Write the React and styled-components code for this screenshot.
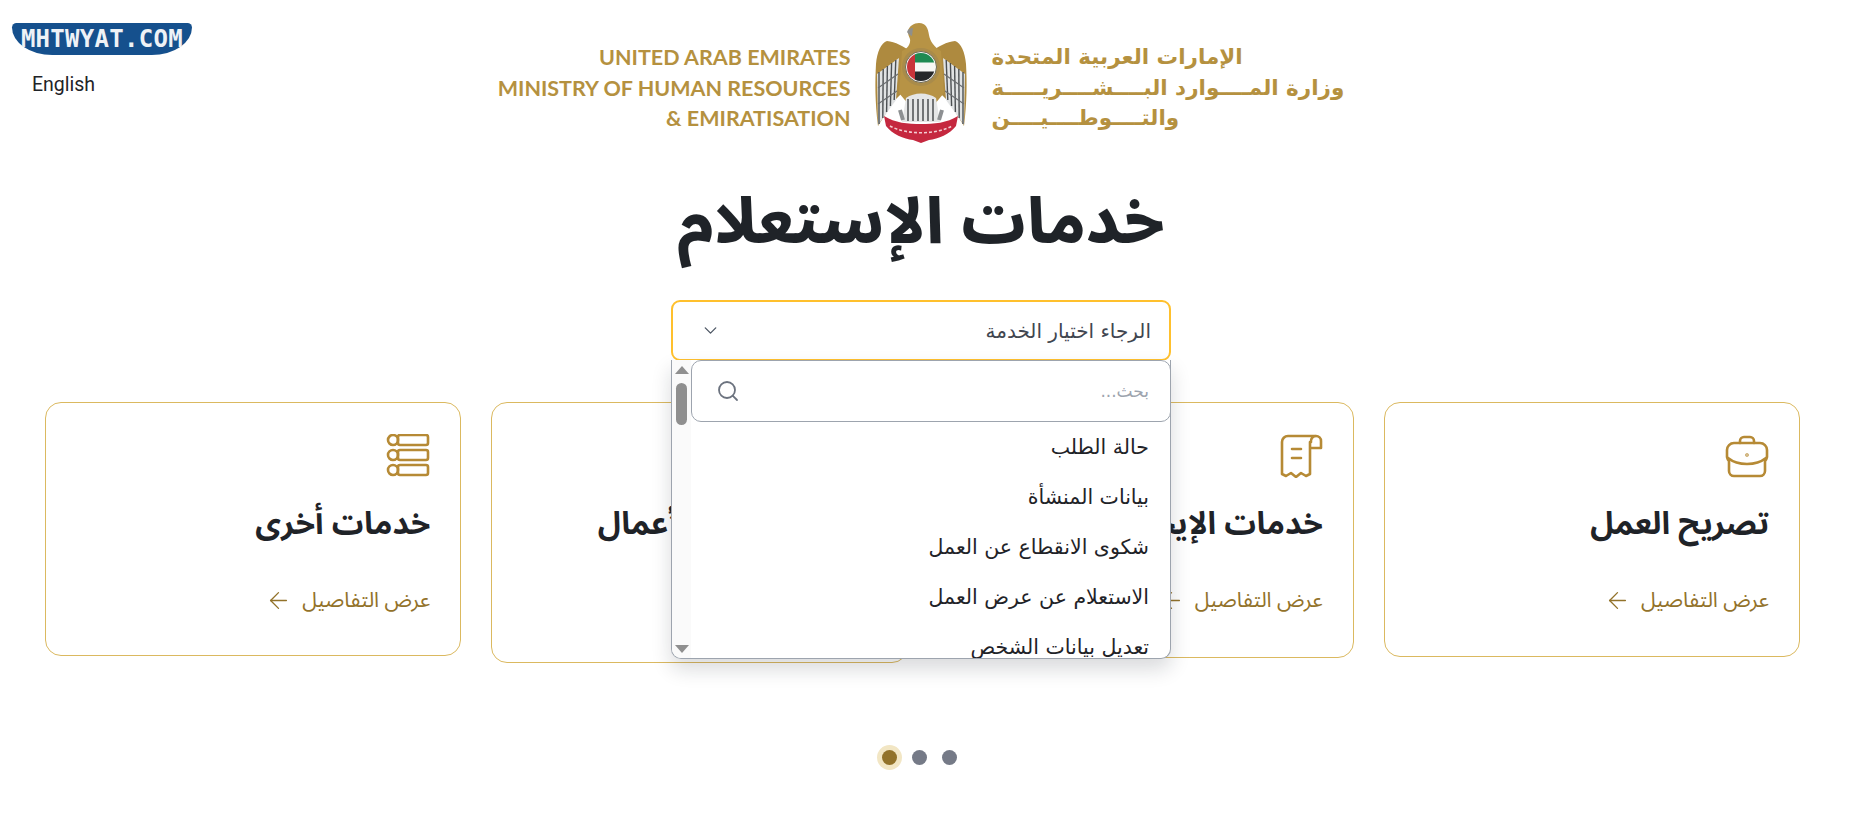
import React from 'react';
import styled, { createGlobalStyle } from 'styled-components';
import { ChevronDown, Search, ArrowLeft } from 'lucide-react';

const ARABIC = `'Noto Sans Arabic', 'DejaVu Sans', sans-serif`;
const ARABIC_UI = `'DejaVu Sans', sans-serif`;

const GlobalStyle = createGlobalStyle`
  html, body { margin: 0; padding: 0; background: #fff; overflow-x: hidden; }
  * { box-sizing: border-box; }
`;

const Page = styled.div`
  min-height: 831px;
  padding-right: 23px;
  font-family: ${ARABIC};
  color: #1f2328;
`;

const TopBar = styled.header`
  display: grid;
  grid-template-columns: 204px 1fr 204px;
  height: 150px;
`;

const Brand = styled.div`
  padding: 23px 0 0 12px;
  direction: ltr;
`;

const BrandPill = styled.div`
  width: 180px;
  height: 32px;
  background: #15508d;
  border-radius: 5px 5px 44px 44px / 5px 5px 30px 30px;
  color: #eef2f6;
  font: 700 24px 'DejaVu Sans Mono', monospace;
  line-height: 32px;
  text-align: center;
  letter-spacing: 0.3px;
`;

const LangLink = styled.a`
  display: block;
  margin: 18px 0 0 20px;
  font: 400 19.5px Roboto, sans-serif;
  color: #1f2328;
`;

const GovLogo = styled.div`
  display: flex;
  justify-content: center;
  align-items: flex-start;
  padding-top: 22px;
  color: #b5913f;
`;

const LogoEnglish = styled.div`
  display: flex;
  flex-direction: column;
  align-items: flex-end;
  padding-top: 20px;
  font: 700 21.5px/30.5px Lato, 'Liberation Sans', sans-serif;
  white-space: nowrap;
`;

const LogoArabic = styled.div`
  display: flex;
  flex-direction: column;
  align-items: flex-end;
  padding-top: 20px;
  font: 700 21.5px/30.5px ${ARABIC_UI};
  white-space: nowrap;
`;

const Emblem = styled.svg`
  width: 92px;
  height: 122px;
  margin: 0 25px 0 24px;
  flex: none;
`;

const Title = styled.h1`
  margin: 0;
  height: 150px;
  padding-top: 28px;
  font-size: 63.5px;
  font-weight: 800;
  line-height: 90px;
  text-align: center;
  direction: rtl;
`;

const SelectWrap = styled.div`
  position: relative;
  width: 500px;
  margin: 0 auto;
  direction: rtl;
`;

const SelectBox = styled.div`
  height: 61px;
  padding: 0 18px 0 27px;
  display: flex;
  align-items: center;
  justify-content: space-between;
  border: 2px solid #ffc02d;
  border-radius: 9px;
  background: #fff;
  color: #414650;
  font: 400 20px ${ARABIC_UI};
`;

const Dropdown = styled.div`
  position: absolute;
  top: 60px;
  left: 0;
  right: 0;
  height: 299px;
  z-index: 5;
  display: flex;
  overflow: hidden;
  background: #fff;
  border: 1px solid #9da4ae;
  border-top: 0;
  border-radius: 0 0 10px 10px;
  box-shadow: 0 10px 20px rgba(16, 24, 40, 0.16);
`;

const DropdownBody = styled.div`
  flex: 1;
  min-width: 0;
  overflow: hidden;
`;

const ScrollRail = styled.div`
  flex: none;
  width: 19px;
  padding: 6px 3px 5px;
  display: flex;
  flex-direction: column;
  align-items: center;
  justify-content: space-between;
  background: #fafafa;
  position: relative;
`;

const ScrollArrow = styled.span`
  width: 0;
  height: 0;
  border-left: 7px solid transparent;
  border-right: 7px solid transparent;
  ${p => (p.$down ? 'border-top' : 'border-bottom')}: 8px solid #8f8f8f;
`;

const ScrollThumb = styled.span`
  position: absolute;
  top: 23px;
  left: 4px;
  width: 11px;
  height: 42px;
  border-radius: 6px;
  background: #8f8f8f;
`;

const SearchRow = styled.div`
  height: 62px;
  display: flex;
  align-items: center;
  justify-content: space-between;
  padding: 0 21px 0 24px;
  border: 1px solid #9da4ae;
  border-radius: 10px;
  margin-right: -1px;
  color: #9da4ae;
  font: 400 17px ${ARABIC_UI};
  svg { color: #6c737f; }
`;

const OptionList = styled.ul`
  list-style: none;
  margin: 0;
  padding: 0 21px 0 0;
`;

const Option = styled.li`
  height: 50px;
  font: 400 20.5px/50px ${ARABIC_UI};
  color: #1f2328;
  white-space: nowrap;
`;

const CardRow = styled.section`
  display: grid;
  grid-template-columns: repeat(4, 1fr);
  gap: 30px;
  align-items: start;
  margin-top: 41px;
  padding-left: 45px;
  direction: rtl;
  width: 1800px;
`;

const Card = styled.article`
  height: ${p => p.$height}px;
  padding: 31px 30px 0 0;
  border: 1px solid #dbb960;
  border-radius: 16px;
  background: #fff;
`;

const CardIcon = styled.svg`
  display: block;
  width: 44px;
  height: 44px;
  fill: none;
  stroke: #b68a35;
  stroke-width: 2.6;
  stroke-linecap: round;
  stroke-linejoin: round;
`;

const CardTitle = styled.h3`
  margin: 22px 0 0;
  font-size: 31.5px;
  font-weight: 700;
  line-height: 48px;
  white-space: nowrap;
`;

const DetailsLink = styled.a`
  display: flex;
  align-items: center;
  gap: 10px;
  margin-top: 38px;
  color: #92722a;
  font-size: 21px;
  line-height: 28px;
`;

const Dots = styled.div`
  display: flex;
  justify-content: center;
  align-items: center;
  gap: 15px;
  margin-top: 87px;
  padding-right: 3px;
`;

const Dot = styled.span`
  width: 15px;
  height: 15px;
  border-radius: 50%;
  background: ${p => (p.$active ? '#92722a' : '#757a87')};
  box-shadow: ${p => (p.$active ? '0 0 0 5px #f2e6c4' : 'none')};
`;

const OPTIONS = [
  'حالة الطلب',
  'بيانات المنشأة',
  'شكوى الانقطاع عن العمل',
  'الاستعلام عن عرض العمل',
  'تعديل بيانات الشخص',
];

const CARDS = [
  { title: 'تصريح العمل', height: 255, icon: 'bag' },
  { title: 'خدمات الإيجار', height: 256, icon: 'receipt' },
  { title: 'خدمات رجال الأعمال', height: 261, icon: 'list' },
  { title: 'خدمات أخرى', height: 254, icon: 'list' },
];

function CardGlyph({ name }) {
  if (name === 'bag') {
    return (
      <CardIcon viewBox="0 0 44 44">
        <path d="M15 9V7a4 4 0 0 1 4-4h6a4 4 0 0 1 4 4v2" />
        <path d="M9 9h26a7 7 0 0 1 7 7v7a8 8 0 0 1-2 4v10a5 5 0 0 1-5 5H9a5 5 0 0 1-5-5V27a8 8 0 0 1-2-4v-7a7 7 0 0 1 7-7z" />
        <path d="M3 24c5 4 11 6 19 6s14-2 19-6" />
        <circle cx="22" cy="21" r="0.5" />
      </CardIcon>
    );
  }
  if (name === 'receipt') {
    return (
      <CardIcon viewBox="0 0 44 44">
        <path d="M36 2H9a6 6 0 0 0-6 6v32l4 2 5-3 5 4 5-4 5 3 4-2V8" />
        <path d="M32 8a5 5 0 0 1 5-6 5 5 0 0 1 5 5v7h-10" />
        <path d="M13 15h9M13 24h9" />
      </CardIcon>
    );
  }
  return (
    <CardIcon viewBox="0 0 44 44">
      {[6, 21, 36].map(y => (
        <g key={y}>
          <circle cx="7" cy={y} r="5" />
          <rect x="12" y={y - 5} width="30" height="10" rx="2" />
        </g>
      ))}
    </CardIcon>
  );
}

function UaeEmblem() {
  const wing = (
    <g>
      <path d="M1 42C2 30 6 21 12 19c8 1 17 5 24 11l-8 40-10 10L3 104C0 80 0 60 1 42z" fill="#ae8a3f" />
      <path d="M2 52l22-16-3 42L3 103z" fill="#e1e3e4" />
      {[0, 1, 2, 3, 4].map(i => (
        <path key={i} d={`M${4 + i * 4.2} ${50 - i * 3}L${4 + i * 3.8} ${102 - i * 6}`} stroke="#4b4f52" strokeWidth="1.4" />
      ))}
      <path d="M3 66l20-14M3 82l19-13" stroke="#6a6d70" strokeWidth="1.1" />
    </g>
  );
  return (
    <Emblem viewBox="0 0 92 122">
      {wing}
      <g transform="matrix(-1 0 0 1 92 0)">{wing}</g>
      <path d="M33 9C34 4 39 1 44 1c7 0 9 5 10 12 1 6 5 12 12 16l3 42-10 12H34L24 71l3-42c5-2 9-7 8-12-1-3-2-4-2-8z" fill="#b79345" />
      <path d="M32 10c1-3 3-4 6-4l-1 8c-2-1-4-2-5-4z" fill="#8f8f8c" />
      <path d="M31 76c8-6 22-6 30 0l4 24H27z" fill="#e5e6e6" />
      {[33, 38, 43, 48, 53, 58].map(x => (
        <path key={x} d={`M${x} 77L${x} 99`} stroke="#55585a" strokeWidth="1.6" />
      ))}
      <path d="M25 88l3 10M67 88l-3 10" stroke="#8d9092" strokeWidth="4" />
      <circle cx="46" cy="45" r="19" fill="#a98b4a" />
      <circle cx="46" cy="45" r="15.500" fill="#f7f7f5" stroke="#6f6a55" />
      <path d="M40 32.350A14 14 0 0 0 40 57.650z" fill="#c8343a" />
      <path d="M40 32.350A14 14 0 0 1 59.260 40.500H40z" fill="#1f8a52" />
      <path d="M40 49.500H59.260A14 14 0 0 1 40 57.650z" fill="#26282a" />
      <path d="M9 94c11 7 24 8 37 8s26-1 37-8l-2 10c-6 8-18 13-27 14l-8 3-8-3c-9-1-21-6-27-14z" fill="#c5283f" />
      <path d="M15 104c16 9 46 9 62 0" stroke="#f3cdd2" strokeWidth="1.6" strokeDasharray="3 2" fill="none" />
    </Emblem>
  );
}

export default function App() {
  return (
    <>
      <GlobalStyle />
      <Page>
        <TopBar>
          <Brand>
            <BrandPill>MHTWYAT.COM</BrandPill>
            <LangLink>English</LangLink>
          </Brand>
          <GovLogo>
            <LogoEnglish>
              <span>UNITED ARAB EMIRATES</span>
              <span>MINISTRY OF HUMAN RESOURCES</span>
              <span>&amp; EMIRATISATION</span>
            </LogoEnglish>
            <UaeEmblem />
            <LogoArabic dir="rtl">
              <span>الإمارات العربية المتحدة</span>
              <span>وزارة المــــوارد البــــشــــريـــــة</span>
              <span>والتــــوطــــيــــن</span>
            </LogoArabic>
          </GovLogo>
          <div />
        </TopBar>

        <Title>خدمات الإستعلام</Title>

        <SelectWrap>
          <SelectBox>
            <span>الرجاء اختيار الخدمة</span>
            <ChevronDown size={21} strokeWidth={1.5} color="#4b5563" />
          </SelectBox>
          <Dropdown>
            <DropdownBody>
              <SearchRow>
                <span>بحث...</span>
                <Search size={24} strokeWidth={1.8} />
              </SearchRow>
              <OptionList>
                {OPTIONS.map(o => <Option key={o}>{o}</Option>)}
              </OptionList>
            </DropdownBody>
            <ScrollRail>
              <ScrollArrow />
              <ScrollThumb />
              <ScrollArrow $down />
            </ScrollRail>
          </Dropdown>
        </SelectWrap>

        <CardRow>
          {CARDS.map(c => (
            <Card key={c.title} $height={c.height}>
              <CardGlyph name={c.icon} />
              <CardTitle>{c.title}</CardTitle>
              <DetailsLink>
                عرض التفاصيل
                <ArrowLeft size={27} strokeWidth={1.2} />
              </DetailsLink>
            </Card>
          ))}
        </CardRow>

        <Dots>
          <Dot $active />
          <Dot />
          <Dot />
        </Dots>
      </Page>
    </>
  );
}
